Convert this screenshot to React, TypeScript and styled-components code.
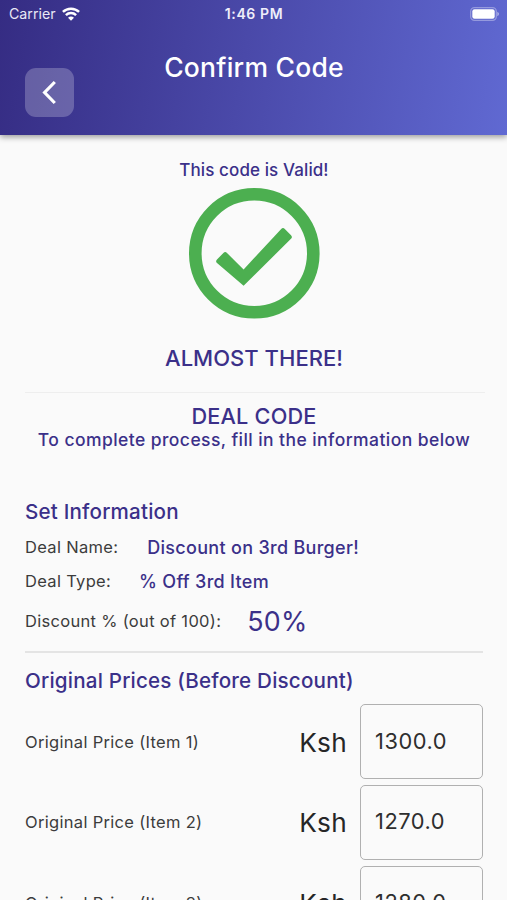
import React from "react";
import styled, { createGlobalStyle } from "styled-components";

const GlobalStyle = createGlobalStyle`
  *, *::before, *::after { box-sizing: border-box; }
  html, body { margin: 0; padding: 0; }
  body {
    height: 900px;
    overflow: hidden;
    background: #fafafa;
    font-family: Inter, "Liberation Sans", sans-serif;
  }
`;

const indigo = "#3b3089";

const Screen = styled.main`
  display: flex;
  flex-direction: column;
  width: 507px;
  height: 900px;
  overflow: hidden;
  background: #fafafa;
`;

const Header = styled.header`
  flex: none;
  height: 135px;
  background: linear-gradient(99deg, #352c83 0%, #4a49a9 48%, #6069d2 100%);
  box-shadow: 0 2px 6px rgba(0, 0, 0, 0.4);
  color: #fff;
`;

const StatusBar = styled.div`
  display: grid;
  grid-template-columns: 1fr auto 1fr;
  align-items: center;
  height: 27px;
  padding: 0 8px 0 9px;
`;

const Carrier = styled.div`
  display: flex;
  align-items: center;
  gap: 6px;
  font-size: 14.2px;
  color: #e9e8f5;
`;

const Clock = styled.div`
  font-size: 14px;
  font-weight: 600;
  letter-spacing: 0.6px;
  color: #efeefa;
`;

const BatteryIcon = styled.svg`
  justify-self: end;
  display: block;
`;

const TitleBar = styled.div`
  display: grid;
  grid-template-columns: 49px 1fr 49px;
  padding: 24px 24px 0 25px;
`;

const BackButton = styled.button`
  display: flex;
  align-items: center;
  justify-content: center;
  width: 49px;
  height: 49px;
  margin-top: 17px;
  padding: 0;
  border: 0;
  border-radius: 11px;
  background: rgba(255, 255, 255, 0.23);
  color: #fff;
`;

const Title = styled.h1`
  margin: 0;
  font-size: 26.5px;
  line-height: 33px;
  font-weight: 500;
  letter-spacing: 0.24px;
  text-align: center;
`;

const Content = styled.div`
  display: flex;
  flex-direction: column;
  padding: 23px 24px 0 25px;
`;

const Centered = styled.p<{ $size: number; $line: number; $track: number }>`
  margin: 0;
  text-align: center;
  white-space: nowrap;
  color: ${indigo};
  font-weight: 500;
  font-size: ${(p) => p.$size}px;
  line-height: ${(p) => p.$line}px;
  letter-spacing: ${(p) => p.$track}px;
`;

const CheckMark = styled.svg`
  display: block;
  align-self: center;
  margin: 6px 0 25px;
`;

const Divider = styled.hr<{ $strong?: boolean }>`
  flex: none;
  height: ${(p) => (p.$strong ? 2 : 1)}px;
  margin: ${(p) => (p.$strong ? "8px 0 0" : "20px -2px 0 0")};
  border: 0;
  background: ${(p) => (p.$strong ? "#e4e4e4" : "#eeeeee")};
`;

const DealBlock = styled.section`
  padding: 11px 0 47px;
`;

const SectionTitle = styled.h2`
  margin: 0;
  height: 28px;
  font-size: 20.6px;
  line-height: 28px;
  font-weight: 500;
  letter-spacing: 0.2px;
  color: ${indigo};
`;

const InfoList = styled.div`
  padding-top: 4px;
`;

const InfoRow = styled.div<{ $height: number; $gap: number }>`
  display: flex;
  align-items: center;
  height: ${(p) => p.$height}px;
  gap: ${(p) => p.$gap}px;
`;

const Label = styled.span`
  font-size: 16.5px;
  letter-spacing: 0.31px;
  white-space: nowrap;
  color: #3c3c3c;
`;

const Value = styled.span<{ $large?: boolean }>`
  font-size: ${(p) => (p.$large ? 26.8 : 18)}px;
  font-weight: ${(p) => (p.$large ? 400 : 500)};
  letter-spacing: 0.3px;
  white-space: nowrap;
  color: ${indigo};
`;

const PriceSection = styled.section`
  padding-top: 14px;
`;

const PriceList = styled.div`
  display: flex;
  flex-direction: column;
  gap: 5.8px;
  padding-top: 9px;
`;

const PriceRow = styled.label`
  display: grid;
  grid-template-columns: 1fr auto 123px;
  align-items: center;
  height: 75px;
`;

const Currency = styled.span`
  padding: 1px 13px 0 0;
  font-size: 26.2px;
  letter-spacing: 0.3px;
  color: #262626;
`;

const PriceInput = styled.input`
  width: 123px;
  height: 75px;
  padding: 0 14px 2px;
  border: 1.5px solid #b0b0b0;
  border-radius: 5px;
  background: transparent;
  font-family: inherit;
  font-size: 21.8px;
  letter-spacing: 0.55px;
  color: #2e2e2e;
  outline: none;
`;

const prices = ["1300.0", "1270.0", "1280.0"];

export default function App() {
  return (
    <>
      <GlobalStyle />
      <Screen>
        <Header>
          <StatusBar>
            <Carrier>
              Carrier
              <svg width="18" height="14" viewBox="0 0 18 14" fill="none" stroke="#fff" strokeWidth="2.5">
                <path d="M0.9 4.9C5.4 .6 12.6 .6 17.1 4.9" />
                <path d="M3.9 8.2C6.8 5.4 11.2 5.4 14.1 8.2" />
                <path d="M9 13.8L6 10.8Q9 8.4 12 10.8Z" fill="#fff" stroke="none" />
              </svg>
            </Carrier>
            <Clock>1:46 PM</Clock>
            <BatteryIcon width="29" height="14" viewBox="0 0 29 14">
              <rect x=".7" y=".7" width="25.6" height="12.6" rx="3.8" fill="none" stroke="#fff" strokeOpacity=".35" strokeWidth="1.3" />
              <rect x="2.3" y="2.3" width="22.4" height="9.4" rx="2.2" fill="#fff" />
              <path d="M27.3 4.8Q29 5.5 29 7T27.3 9.2Z" fill="#fff" fillOpacity=".5" />
            </BatteryIcon>
          </StatusBar>
          <TitleBar>
            <BackButton aria-label="Back">
              <svg width="15" height="25" viewBox="0 0 15 25" fill="none" stroke="currentColor" strokeWidth="3.2">
                <path d="M12.8 2L2.6 12.5L12.8 23" />
              </svg>
            </BackButton>
            <Title>Confirm Code</Title>
          </TitleBar>
        </Header>
        <Content>
          <Centered $size={17} $line={24} $track={0.1}>This code is Valid!</Centered>
          <CheckMark width="131" height="131" viewBox="0 0 131 131">
            <circle cx="65.3" cy="65.3" r="59" fill="none" stroke="#4caf50" strokeWidth="12.6" />
            <path
              d="M28 71.4L34.4 65Q36.2 63.2 38 65L54.6 81.4L92.2 41Q94 39.2 95.8 41L102 47.2Q103.8 49 102 50.8L54.6 97.8L28 75Q26.2 73.2 28 71.4Z"
              fill="#4caf50"
            />
          </CheckMark>
          <Centered $size={22} $line={28} $track={0.02}>ALMOST THERE!</Centered>
          <Divider />
          <DealBlock>
            <Centered $size={21.7} $line={24} $track={0.2}>DEAL CODE</Centered>
            <Centered $size={17.5} $line={23} $track={0.43}>To complete process, fill in the information below</Centered>
          </DealBlock>
          <SectionTitle>Set Information</SectionTitle>
          <InfoList>
            <InfoRow $height={34} $gap={29}>
              <Label>Deal Name:</Label>
              <Value>Discount on 3rd Burger!</Value>
            </InfoRow>
            <InfoRow $height={34} $gap={28}>
              <Label>Deal Type:</Label>
              <Value>% Off 3rd Item</Value>
            </InfoRow>
            <InfoRow $height={45} $gap={26}>
              <Label>Discount % (out of 100):</Label>
              <Value $large>50%</Value>
            </InfoRow>
          </InfoList>
          <Divider $strong />
          <PriceSection>
            <SectionTitle>Original Prices (Before Discount)</SectionTitle>
            <PriceList>
              {prices.map((price, i) => (
                <PriceRow key={price}>
                  <Label>Original Price (Item {i + 1})</Label>
                  <Currency>Ksh</Currency>
                  <PriceInput defaultValue={price} />
                </PriceRow>
              ))}
            </PriceList>
          </PriceSection>
        </Content>
      </Screen>
    </>
  );
}
